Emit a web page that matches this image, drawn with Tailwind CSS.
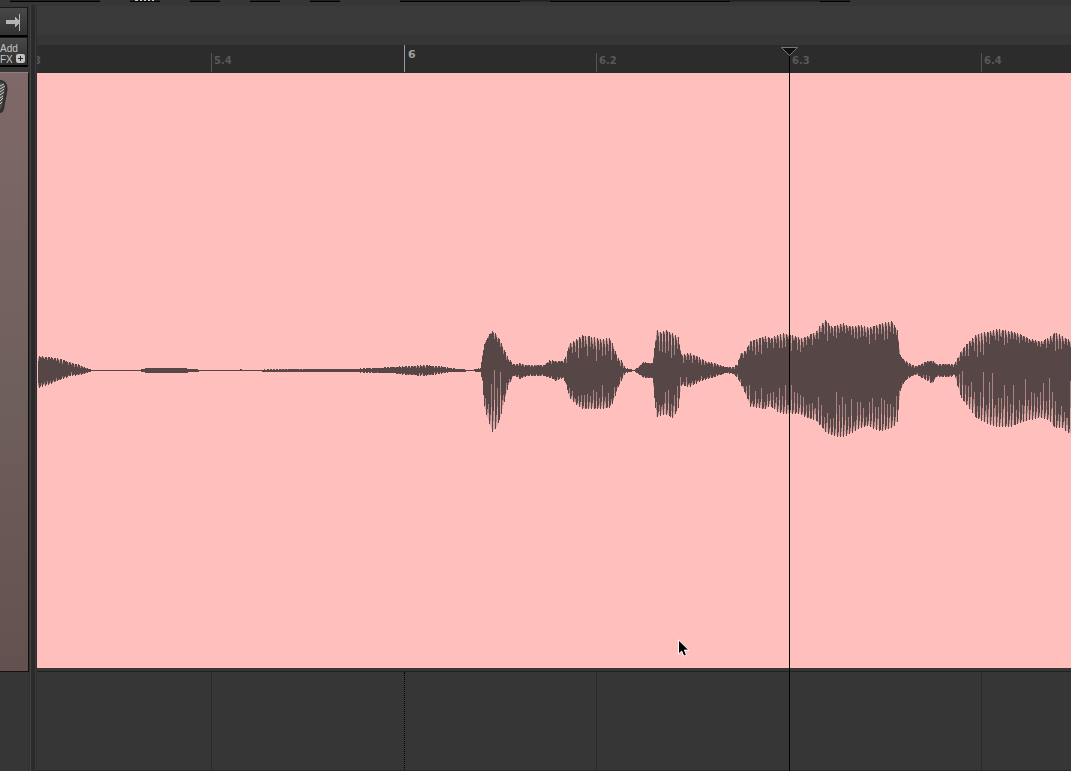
<!DOCTYPE html>
<html lang="en">

<head>
    <meta charset="UTF-8">
    <meta name="viewport" content="width=device-width, initial-scale=1.0">
    <title>Arrange view</title>
    <script src="https://cdn.jsdelivr.net/npm/@tailwindcss/browser@4"></script>
</head>

<body class="bg-[#363636] overflow-hidden">
    <div class="relative flex min-h-screen">
        <!-- bottom edge of the toolbar -->
        <svg class="absolute top-0 left-0 h-[3px] w-full" viewBox="0 0 1071 3" preserveAspectRatio="none" shape-rendering="crispEdges">
            <path fill="#222" d="M10 0h90v1H10zM130 0h30v1h-30zM190 0h30v1h-30zM250 0h30v1h-30zM310 0h30v1h-30zM400 0h450v1H400z" />
            <path fill="#000" d="M10 1h90v1H10zM130 1h30v1h-30zM190 1h30v1h-30zM250 1h30v1h-30zM310 1h30v1h-30zM400 1h120v1H400zM550 1h180v1H550zM820 1h30v1h-30z" />
            <path fill="#2a2a2a" d="M520 1h30v1h-30zM730 1h90v1h-90z" />
            <path fill="#ccc" d="M135 0h3v1h-3zM140 0h2v1h-2zM144 0h2v1h-2zM148 0h2v1h-2zM152 0h2v1h-2z" />
        </svg>

        <!-- track panel -->
        <div class="flex w-[29px] shrink-0 flex-col pt-[7px]">
            <button type="button" aria-label="Output" class="flex h-[30px] w-[28px] items-center border-t border-r border-b-2 border-t-[#191919] border-r-[#151515] border-b-black bg-linear-to-b from-[#484848] to-[#333]">
                <svg class="h-[18px] w-[22px]" viewBox="0 0 22 18" shape-rendering="crispEdges">
                    <path fill="#b4b4b4" d="M6 7h9V4h1v1h1v1h1v1h1v4h-1v1h-1v1h-1v1h-1v-3H6zM19 1h1v17h-1z" />
                </svg>
            </button>
            <button type="button" class="relative h-[30px] w-[28px] border-t border-r border-b-2 border-t-[#191919] border-r-[#151515] border-b-black bg-linear-to-b from-[#484848] to-[#303030] pt-[4px] text-left font-['Liberation_Sans',sans-serif] text-[10px] leading-[11px] text-[#c4c4c4]">
                Add<br>FX
                <svg class="absolute right-[2px] bottom-[2px] h-[9px] w-[9px]" viewBox="0 0 9 9">
                    <rect width="9" height="9" rx="2" fill="#c0c0c0" />
                    <path fill="#222" d="M4 2h1v2h2v1H5v2H4V5H2V4h2z" />
                </svg>
            </button>
            <div class="mt-[5px] h-[600px] border-t border-r border-b border-t-[#8f7c7b] border-r-[#150f0f] border-b-[#150f0f] bg-linear-to-b from-[#7f6968] via-[#70605d] to-[#635150]">
                <svg class="mt-[6px] h-[36px] w-[9px]" viewBox="0 0 9 36">
                    <path fill="#303030" d="M0 1Q5 1 7 6Q8 9 7 14L4 30Q3 34 0 34z" />
                    <path fill="#4a4a4a" d="M0 3Q4 4 5 8L2 28L0 31z" />
                    <path stroke="#ccc" stroke-width="1" fill="none" d="M0 7l4-2M0 10l5-3M0 13l4-3M0 16l4-3M0 19l3-2M0 22l3-3M0 25l2-2" />
                </svg>
            </div>
        </div>

        <!-- splitter -->
        <div class="mt-[5px] flex w-[8px] shrink-0">
            <div class="w-px bg-[#303030]"></div>
            <div class="w-px bg-[#444]"></div>
            <div class="w-[4px] bg-[#2a2a2a]"></div>
            <div class="w-px bg-[#3a3a3a]"></div>
            <div class="w-px bg-[#2f2f2f]"></div>
        </div>

        <!-- timeline -->
        <main class="relative flex min-w-0 flex-1 flex-col pt-[6px]">
            <div class="h-[28px] bg-[#3a3a3a]"></div>
            <div class="mt-[11px] grid h-[28px] grid-cols-[174fr_193fr_192fr_193fr_192fr_90fr] items-end overflow-hidden bg-[#2c2c2c] pb-px font-['DejaVu_Sans',sans-serif] text-[10px] leading-[16px] font-bold text-[#595959]">
                <div class="h-[19px] overflow-hidden"><span class="-ml-[3px]">3</span></div>
                <div class="h-[19px] border-l border-[#555] pl-[2px]">5.4</div>
                <div class="h-[27px] border-l border-[#999] pt-[2px] pl-[3px] text-[11px] text-[#a0a0a0]">6</div>
                <div class="h-[19px] border-l border-[#555] pl-[2px]">6.2</div>
                <div class="h-[19px] border-l border-[#555] pl-[2px]">6.3</div>
                <div class="h-[19px] border-l border-[#555] pl-[2px]">6.4</div>
            </div>
            <div class="h-[595px] bg-[#ffbfbd]">
                <svg class="h-full w-full" viewBox="37 73 1034 595" preserveAspectRatio="none" shape-rendering="crispEdges" fill="#564645">
                    <path id="wave" />
                    <path id="shade" opacity="0.5" />
                    <path id="fade" opacity="0.2" />
                </svg>
            </div>
            <div class="mt-[3px] grid min-h-[99px] flex-1 grid-cols-[174fr_193fr_192fr_193fr_192fr_90fr] border-t border-b border-t-[#202020] border-b-[#2a2a2a]">
                <div></div>
                <div class="border-l border-[#292929]"></div>
                <div class="border-l border-dotted border-black"></div>
                <div class="border-l border-[#292929]"></div>
                <div></div>
                <div class="border-l border-[#292929]"></div>
            </div>

            <!-- play cursor -->
            <div class="pointer-events-none absolute inset-x-0 top-[47px] bottom-0 grid grid-cols-[752fr_282fr]">
                <div></div>
                <div class="relative">
                    <div class="absolute top-[8px] bottom-0 left-0 w-px bg-black"></div>
                    <svg class="absolute top-0 -left-[8px] h-[9px] w-[17px]" viewBox="0 0 17 9">
                        <path fill="#111" stroke="#777" d="M.5 .5h16L8.500 8.500z" />
                    </svg>
                </div>
            </div>
            <!-- mouse pointer -->
            <svg class="absolute top-[639px] left-[62%] h-[19px] w-[13px]" viewBox="0 0 13 19">
                <path fill="#000" stroke="#fff" d="M.5 .9v14.200l3.200-3 2.100 5.100 2.700-1.200-2.100-4.900h4.500z" />
            </svg>
        </main>
    </div>

    <script>
        // x, peak top, valley top, valley bottom, peak bottom
        const envelope = [
            [38, 356, 363, 380, 388], [50, 357, 360, 380, 384], [60, 359, 363, 376, 380], [70, 362, 366, 373, 376],
            [80, 365, 368, 372, 375], [86, 368, 369, 372, 373], [92, 370, 370, 371, 371], [138, 370, 370, 371, 371],
            [147, 368, 368, 373, 373], [182, 368, 368, 373, 373], [192, 369, 369, 372, 372], [204, 370, 370, 371, 371],
            [236, 370, 370, 371, 371], [240, 369, 370, 371, 371], [244, 370, 370, 371, 371], [280, 369, 370, 372, 372],
            [345, 369, 369, 372, 372], [372, 368, 369, 372, 373], [390, 367, 368, 373, 373], [405, 366, 368, 373, 375],
            [424, 365, 368, 373, 376], [440, 366, 368, 372, 374], [450, 368, 369, 372, 372], [460, 369, 369, 372, 372],
            [470, 370, 370, 371, 371], [480, 368, 369, 372, 372], [482, 355, 358, 380, 382], [484, 344, 346, 394, 408],
            [488, 335, 339, 390, 421], [492, 331, 335, 373, 432], [496, 334, 342, 373, 428], [500, 341, 350, 378, 418],
            [504, 350, 356, 388, 402], [508, 358, 363, 378, 386], [513, 364, 366, 374, 376], [520, 363, 366, 375, 379],
            [526, 365, 367, 374, 376], [544, 365, 367, 374, 376], [549, 360, 364, 376, 378], [556, 361, 363, 377, 381],
            [563, 361, 363, 377, 378], [566, 355, 362, 380, 386], [569, 343, 354, 386, 398], [575, 340, 356, 390, 404],
            [582, 335, 356, 388, 409], [592, 337, 360, 390, 409], [602, 339, 360, 385, 409], [609, 338, 358, 385, 408],
            [613, 345, 358, 390, 402], [617, 357, 362, 383, 389], [621, 360, 366, 376, 381], [625, 368, 369, 372, 373],
            [634, 370, 370, 371, 371], [639, 366, 367, 374, 375], [643, 362, 364, 376, 378], [652, 363, 365, 377, 378],
            [654, 348, 356, 388, 398], [656, 330, 344, 386, 418], [661, 332, 352, 384, 415], [666, 330, 356, 384, 415],
            [673, 334, 354, 382, 418], [678, 337, 350, 382, 408], [681, 354, 362, 378, 386], [689, 353, 364, 378, 387],
            [697, 356, 364, 377, 383], [705, 361, 366, 376, 380], [715, 363, 367, 374, 377], [726, 367, 368, 372, 373],
            [732, 367, 369, 372, 374], [737, 364, 367, 375, 378], [740, 353, 360, 378, 384], [745, 351, 356, 384, 394],
            [750, 341, 352, 388, 407], [758, 338, 354, 388, 408], [764, 336, 352, 390, 410], [770, 338, 350, 388, 406],
            [777, 335, 350, 388, 412], [784, 333, 352, 390, 414], [792, 335, 348, 390, 414], [800, 338, 350, 392, 414],
            [806, 336, 348, 392, 418], [815, 332, 346, 394, 420], [820, 325, 344, 398, 426], [825, 320, 338, 400, 432],
            [832, 327, 340, 398, 436], [842, 323, 332, 400, 437], [850, 326, 335, 405, 434], [860, 325, 340, 398, 428],
            [868, 327, 342, 400, 426], [876, 325, 338, 400, 430], [882, 323, 338, 402, 431], [892, 321, 338, 400, 428],
            [897, 330, 342, 395, 422], [900, 355, 358, 385, 391], [904, 360, 363, 380, 382], [910, 364, 367, 374, 377],
            [916, 366, 368, 373, 375], [924, 362, 366, 375, 379], [932, 360, 364, 376, 384], [936, 364, 366, 375, 377],
            [950, 364, 366, 375, 377], [954, 364, 367, 373, 375], [957, 358, 363, 377, 386], [961, 350, 360, 374, 398],
            [970, 340, 356, 374, 410], [976, 334, 354, 376, 418], [985, 332, 352, 380, 423], [997, 329, 346, 382, 427],
            [1010, 331, 346, 380, 427], [1020, 334, 344, 380, 423], [1030, 339, 345, 384, 420], [1040, 341, 350, 384, 418],
            [1048, 338, 350, 384, 420], [1055, 332, 348, 390, 428], [1062, 336, 348, 384, 428], [1071, 341, 350, 390, 436]
        ];
        let wave = '', shade = '', fade = '', k = 0;
        const bar = (x, a, b) => b > a ? `M${x} ${a}h1V${b}h-1z` : '';
        const noise = n => Math.abs(Math.sin(n * 12.9898) * 43758.5453) % 1;
        // how far a column falls back from peak to valley
        const fall = (x, seed) => {
            const n = noise(x + seed);
            return x % 3 === 0 ? 0 : x % 3 === 1 ? n * 0.4 : 0.3 + n * 0.9;
        };
        for (let x = 38; x < 1071; x++) {
            while (envelope[k + 1][0] < x) k++;
            const p = envelope[k], q = envelope[k + 1], t = (x - p[0]) / (q[0] - p[0]);
            const [top, inTop, inBottom, bottom] = [1, 2, 3, 4].map(i => p[i] + (q[i] - p[i]) * t);
            const a = Math.round(top + (inTop - top) * fall(x, 0));
            const b = Math.max(a + 1, Math.round(bottom + (inBottom - bottom) * fall(x, 500)));
            const upper = Math.round((a - top) / 2), lower = Math.round((bottom - b) / 2);
            wave += bar(x, a, b);
            shade += bar(x, a - upper, a) + bar(x, b, b + lower);
            fade += bar(x, Math.round(top) + 1, a - upper) + bar(x, b + lower, Math.round(bottom) - 1);
        }
        document.getElementById('wave').setAttribute('d', wave);
        document.getElementById('shade').setAttribute('d', shade);
        document.getElementById('fade').setAttribute('d', fade);
    </script>
</body>

</html>
